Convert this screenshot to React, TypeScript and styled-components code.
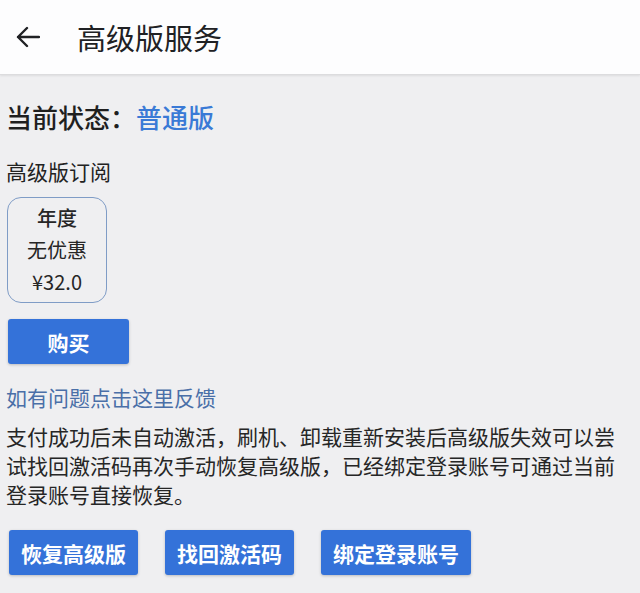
import styled, { createGlobalStyle } from 'styled-components'

const GlobalStyle = createGlobalStyle`
  html, body {
    margin: 0;
    padding: 0;
    background: #efeff1;
  }
  body {
    font-family: "Noto Sans CJK SC", "Noto Sans", sans-serif;
    color: #222;
  }
`

const Page = styled.div`
  width: 640px;
  min-height: 593px;
  background: #efeff1;
`

const Header = styled.header`
  height: 74px;
  display: flex;
  align-items: center;
  padding-left: 16px;
  background: #fdfdfe;
  border-bottom: 1px solid #dcdcde;
  box-shadow: 0 1px 2px rgba(0, 0, 0, 0.08);
`

const Title = styled.h1`
  margin: 0 0 0 37px;
  font-size: 29px;
  font-weight: 400;
  color: #202124;
`

const Content = styled.main`
  padding: 0 6px;
`

const Status = styled.div`
  margin-top: 24px;
  font-size: 26px;
  line-height: 36px;
  font-weight: 500;
  color: #1f1f1f;
`

const Accent = styled.span`
  color: #3a7ad6;
`

const Label = styled.div`
  margin-top: 22px;
  font-size: 21px;
  line-height: 29px;
`

const PlanCard = styled.div`
  margin: 11px 0 0 1px;
  width: 98px;
  padding: 4px 0;
  border: 1px solid #7f9cc6;
  border-radius: 14px;
  display: flex;
  flex-direction: column;
  align-items: center;
  font-size: 20px;
  line-height: 32px;
`

const PlanLine = styled.span<{ $strong?: boolean }>`
  font-weight: ${(p) => (p.$strong ? 500 : 400)};
  color: #262626;
`

const Button = styled.button<{ $w: number }>`
  width: ${(p) => p.$w}px;
  height: 45px;
  border: none;
  border-radius: 3px;
  background: #3472d9;
  color: #fff;
  font-family: inherit;
  font-size: 21px;
  font-weight: 700;
  box-shadow: 0 1px 3px rgba(0, 0, 0, 0.22);
  cursor: pointer;
  padding: 0;
`

const BuyRow = styled.div`
  margin: 16px 0 0 2px;
`

const Feedback = styled.a`
  display: block;
  margin-top: 19px;
  font-size: 21px;
  line-height: 29px;
  color: #4a6fa8;
  text-decoration: none;
`

const Note = styled.p`
  margin: 10px 0 0;
  font-size: 21px;
  line-height: 29px;
  color: #262626;
`

const Actions = styled.div`
  display: flex;
  gap: 27px;
  margin: 21px 0 0 3px;
`

function BackArrow() {
  return (
    <svg width="24" height="22" viewBox="0 0 24 22" fill="none">
      <path d="M23 11H2M11 2L2 11l9 9" stroke="#202124" strokeWidth="2.4" strokeLinecap="round" strokeLinejoin="round" />
    </svg>
  )
}

export default function App() {
  return (
    <Page>
      <GlobalStyle />
      <Header>
        <BackArrow />
        <Title>高级版服务</Title>
      </Header>
      <Content>
        <Status>
          当前状态：<Accent>普通版</Accent>
        </Status>
        <Label>高级版订阅</Label>
        <PlanCard>
          <PlanLine $strong>年度</PlanLine>
          <PlanLine>无优惠</PlanLine>
          <PlanLine>¥32.0</PlanLine>
        </PlanCard>
        <BuyRow>
          <Button $w={121}>购买</Button>
        </BuyRow>
        <Feedback href="#">如有问题点击这里反馈</Feedback>
        <Note>
          支付成功后未自动激活，刷机、卸载重新安装后高级版失效可以尝试找回激活码再次手动恢复高级版，已经绑定登录账号可通过当前登录账号直接恢复。
        </Note>
        <Actions>
          <Button $w={129}>恢复高级版</Button>
          <Button $w={129}>找回激活码</Button>
          <Button $w={150}>绑定登录账号</Button>
        </Actions>
      </Content>
    </Page>
  )
}
